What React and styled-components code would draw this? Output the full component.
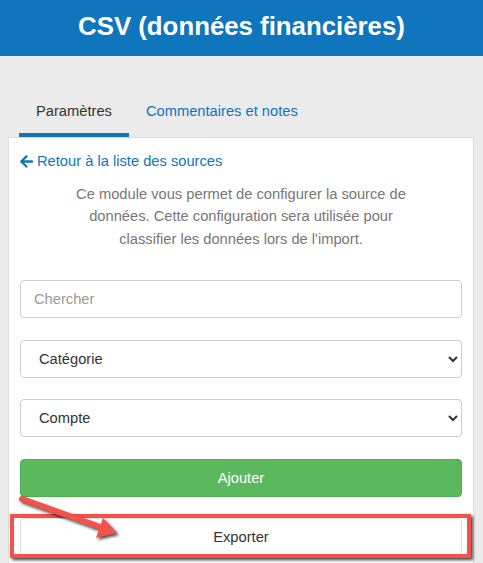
import React from "react";
import styled, { createGlobalStyle } from "styled-components";

const Global = createGlobalStyle`
  html, body { margin: 0; padding: 0; overflow: hidden; }
  body {
    background: #ebebeb;
    font-family: "Liberation Sans", Arial, Helvetica, sans-serif;
    font-size: 14.7px;
    color: #333;
  }
  * { box-sizing: border-box; }
`;

const Header = styled.header`
  height: 56px;
  background: #0f75bd;
  color: #fff;
  text-align: center;
  padding-bottom: 4px;
`;

const Title = styled.h1`
  margin: 0;
  font-size: 25.8px;
  font-weight: bold;
  line-height: 52px;
`;

const Main = styled.main`
  padding: 33px 9px 0 8px;
`;

const Tabs = styled.nav`
  display: flex;
  padding-left: 11px;
`;

const Tab = styled.div`
  padding: 12px 17px 12px;
  line-height: 20px;
  color: ${(p) => (p.$active ? "#333" : "#0f75bd")};
  border-bottom: 4px solid ${(p) => (p.$active ? "#0f75bd" : "transparent")};
`;

const Panel = styled.section`
  background: #fff;
  border: 1px solid #dddddd;
  padding: 12px 11px 40px;
  min-height: 460px;
`;

const BackLink = styled.a`
  display: flex;
  align-items: center;
  gap: 4px;
  color: #0f75bd;
  text-decoration: none;
  line-height: 22px;
`;

const Description = styled.p`
  margin: 11px auto 30px;
  max-width: 360px;
  text-align: center;
  color: #777;
  line-height: 22.4px;
`;

const Form = styled.div`
  display: flex;
  flex-direction: column;
  gap: 21.5px;
`;

const Input = styled.input`
  height: 38px;
  width: 100%;
  border: 1px solid #cccccc;
  border-radius: 4px;
  padding: 0 13px;
  font: inherit;
  color: #333;
  &::placeholder { color: #999; }
`;

const Select = styled.select`
  height: 38px;
  width: 100%;
  border: 1px solid #cccccc;
  border-radius: 4px;
  padding: 0 8px 0 14px;
  font: inherit;
  color: #333;
  background: #fff;
`;

const Button = styled.button`
  height: 38px;
  width: 100%;
  border-radius: 4px;
  font: inherit;
  border: 1px solid ${(p) => (p.$variant === "success" ? "#4cae4c" : "#e0e0e0")};
  background: ${(p) => (p.$variant === "success" ? "#5cb85c" : "#fff")};
  color: ${(p) => (p.$variant === "success" ? "#fff" : "#333")};
`;

const ExportArea = styled.div`
  position: relative;
`;

const Frame = styled.div`
  position: absolute;
  left: -10px;
  right: -9px;
  top: -4px;
  bottom: -2px;
  border: 4px solid #f2524a;
  box-shadow: 2px 2px 3px rgba(0, 0, 0, 0.75);
  pointer-events: none;
`;

const Arrow = styled.svg`
  position: absolute;
  left: -6px;
  top: -27px;
  width: 110px;
  height: 50px;
  overflow: visible;
  filter: drop-shadow(2px 2px 1.5px rgba(0, 0, 0, 0.7));
  pointer-events: none;
`;

const ArrowLeft = () => (
  <svg width="13" height="13" viewBox="0 0 448 448" aria-hidden="true">
    <path
      fill="#0f75bd"
      d="M257 412l-22 22c-9 9-25 9-34 0L7 240c-9-9-9-25 0-34L201 12c9-9 25-9 34 0l22 22c10 10 9 25 0 35L137 184h287c13 0 24 11 24 24v32c0 13-11 24-24 24H137l120 114c10 10 10 25 0 34z"
    />
  </svg>
);

export default function App() {
  return (
    <>
      <Global />
      <Header>
        <Title>CSV (données financières)</Title>
      </Header>
      <Main>
        <Tabs>
          <Tab $active>Paramètres</Tab>
          <Tab>Commentaires et notes</Tab>
        </Tabs>
        <Panel>
          <BackLink href="#">
            <ArrowLeft />
            Retour à la liste des sources
          </BackLink>
          <Description>
            Ce module vous permet de configurer la source de données. Cette
            configuration sera utilisée pour classifier les données lors de
            l'import.
          </Description>
          <Form>
            <Input placeholder="Chercher" />
            <Select defaultValue="cat">
              <option value="cat">Catégorie</option>
            </Select>
            <Select defaultValue="cpt">
              <option value="cpt">Compte</option>
            </Select>
            <Button $variant="success">Ajouter</Button>
            <ExportArea>
              <Button>Exporter</Button>
              <Frame />
              <Arrow viewBox="0 0 110 50">
                <line
                  x1="8"
                  y1="8"
                  x2="86"
                  y2="36"
                  stroke="#f2524a"
                  strokeWidth="6"
                  strokeLinecap="round"
                />
                <polygon points="103,42 89,27 82,47" fill="#f2524a" />
              </Arrow>
            </ExportArea>
          </Form>
        </Panel>
      </Main>
    </>
  );
}
